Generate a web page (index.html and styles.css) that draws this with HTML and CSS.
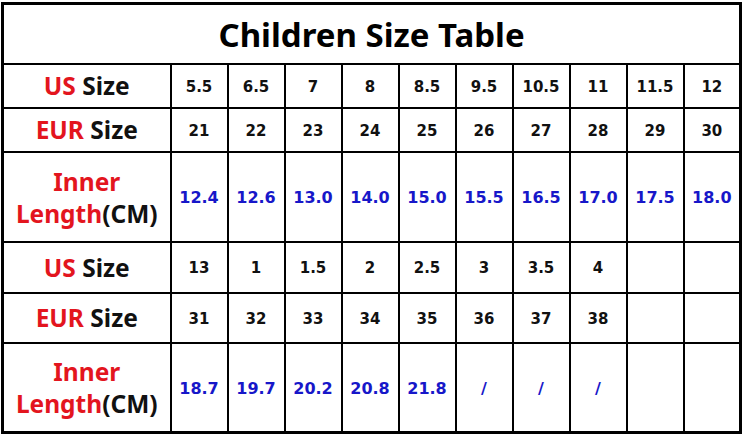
FILE: index.html
```html
<!DOCTYPE html>
<html lang="en">

<head>
    <meta charset="UTF-8">
    <meta name="viewport" content="width=device-width,initial-scale=1.0">
    <title>Children Size Table</title>
    <link rel="stylesheet" href="styles.css">
</head>

<body>
    <table class="sizes">
        <colgroup>
            <col class="label-col">
            <col span="10" class="val-col">
        </colgroup>
        <tr class="title-row">
            <th colspan="11" class="title">Children Size Table</th>
        </tr>
        <tr class="row-s">
            <th class="label"><span class="red">US</span> Size</th>
            <td>5.5</td><td>6.5</td><td>7</td><td>8</td><td>8.5</td>
            <td>9.5</td><td>10.5</td><td>11</td><td>11.5</td><td>12</td>
        </tr>
        <tr class="row-s">
            <th class="label"><span class="red">EUR</span> Size</th>
            <td>21</td><td>22</td><td>23</td><td>24</td><td>25</td>
            <td>26</td><td>27</td><td>28</td><td>29</td><td>30</td>
        </tr>
        <tr class="row-l">
            <th class="label two-line"><span class="red">Inner</span><br><span class="red">Length</span>(CM)</th>
            <td class="cm">12.4</td><td class="cm">12.6</td><td class="cm">13.0</td><td class="cm">14.0</td><td class="cm">15.0</td>
            <td class="cm">15.5</td><td class="cm">16.5</td><td class="cm">17.0</td><td class="cm">17.5</td><td class="cm">18.0</td>
        </tr>
        <tr class="row-m">
            <th class="label"><span class="red">US</span> Size</th>
            <td>13</td><td>1</td><td>1.5</td><td>2</td><td>2.5</td>
            <td>3</td><td>3.5</td><td>4</td><td></td><td></td>
        </tr>
        <tr class="row-m2">
            <th class="label"><span class="red">EUR</span> Size</th>
            <td>31</td><td>32</td><td>33</td><td>34</td><td>35</td>
            <td>36</td><td>37</td><td>38</td><td></td><td></td>
        </tr>
        <tr class="row-l">
            <th class="label two-line"><span class="red">Inner</span><br><span class="red">Length</span>(CM)</th>
            <td class="cm">18.7</td><td class="cm">19.7</td><td class="cm">20.2</td><td class="cm">20.8</td><td class="cm">21.8</td>
            <td class="cm">/</td><td class="cm">/</td><td class="cm">/</td><td></td><td></td>
        </tr>
    </table>
</body>

</html>
```

FILE: styles.css
```css
/* Size chart */
* {
    padding: 0;
    margin: 0;
    box-sizing: border-box;
}

body {
    background: #fff;
    padding: 2px 0 0 1px;
}

.sizes {
    border-collapse: collapse;
    table-layout: fixed;
    width: 738px;
    border: 3px solid #000;
}

.label-col {
    width: 168px;
}

.val-col {
    width: 57px;
}

.sizes th,
.sizes td {
    border: 2px solid #000;
    text-align: center;
    vertical-align: middle;
    padding: 2px 0 0;
}

/* heading */
.title {
    height: 60px;
    font-family: "Noto Sans", "Open Sans", sans-serif;
    font-weight: bold;
    font-size: 33px;
    color: #000;
    padding: 0;
}

.row-s {
    height: 44px;
}

.row-m {
    height: 51px;
}

.row-m2 {
    height: 50px;
}

.row-l {
    height: 90px;
}

/* first column */
.label {
    font-family: "Noto Sans", "Open Sans", sans-serif;
    font-weight: bold;
    font-size: 24.5px;
    color: #111;
    line-height: 1;
}

.two-line {
    line-height: 32px;
}

.red {
    color: #e3151e;
}

/* numbers */
.sizes td {
    font-family: "DejaVu Sans", Verdana, sans-serif;
    font-weight: bold;
    font-size: 15px;
    color: #111;
}

.sizes td.cm {
    color: #1717c9;
    font-size: 16px;
}
```
